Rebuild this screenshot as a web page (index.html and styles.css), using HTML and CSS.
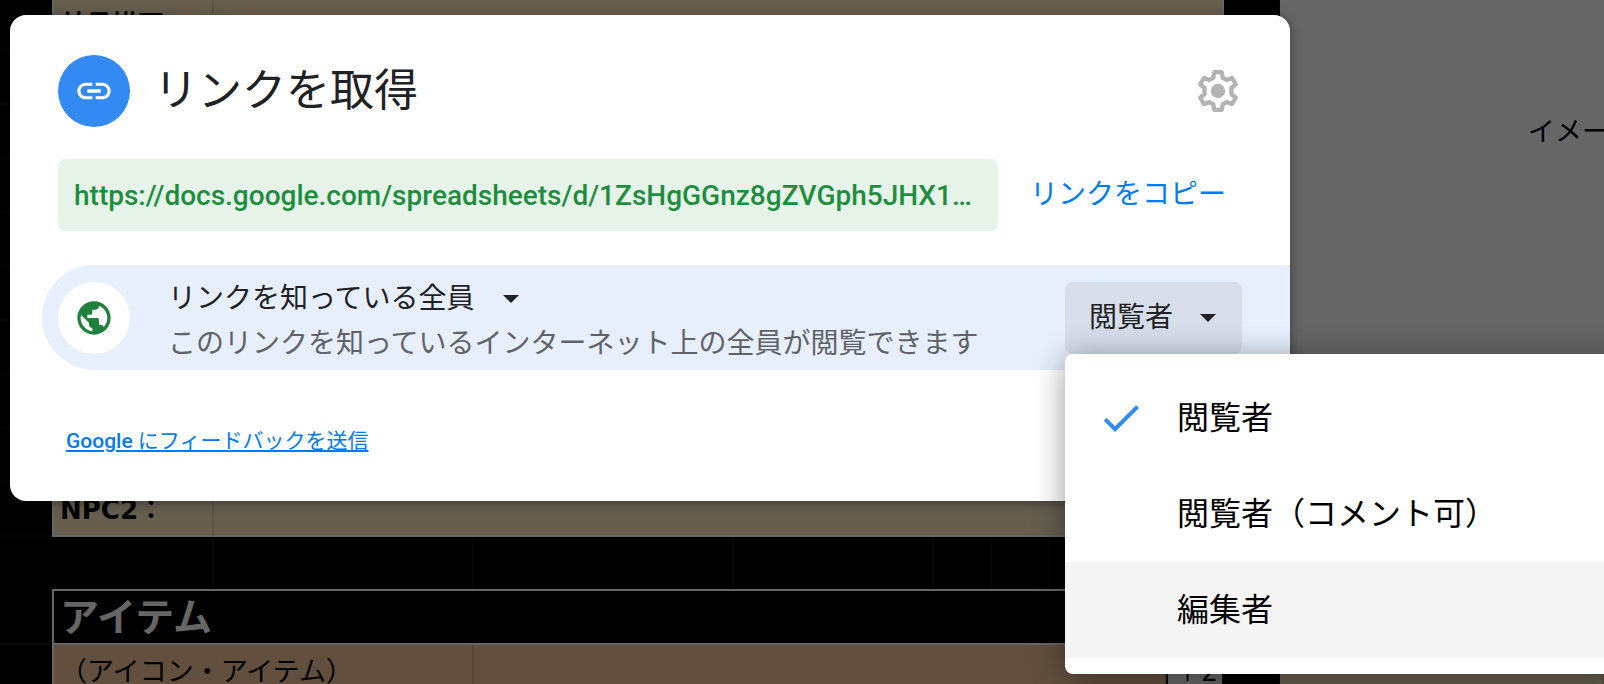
FILE: index.html
```
<!DOCTYPE html>
<html lang="ja">

<head>
     <meta charset="UTF-8">
     <meta name="viewport" content="width=device-width, initial-scale=1.0">
     <title>リンクを取得</title>
     <link rel="stylesheet" href="styles.css">
</head>

<body>
     <!-- 背面のスプレッドシート -->
     <div class="sheet">
          <table class="grid">
               <colgroup>
                    <col class="col-edge">
                    <col class="col-label">
                    <col class="col-wide">
                    <col class="col-wide">
                    <col class="col-mid">
                    <col class="col-small">
                    <col class="col-small">
                    <col class="col-last">
                    <col class="col-small">
                    <col class="col-gap">
                    <col>
               </colgroup>
               <tbody>
                    <tr class="first">
                         <td></td>
                         <th class="beige left" scope="row">外見描写</th>
                         <td class="beige right" colspan="7"></td>
                         <td></td>
                         <td class="memo" rowspan="11">イメージ</td>
                    </tr>
                    <tr><td></td><td class="beige left"></td><td class="beige right" colspan="7"></td><td></td></tr>
                    <tr><td></td><td class="beige left"></td><td class="beige right" colspan="7"></td><td></td></tr>
                    <tr><td></td><td class="beige left"></td><td class="beige right" colspan="7"></td><td></td></tr>
                    <tr><td></td><td class="beige left"></td><td class="beige right" colspan="7"></td><td></td></tr>
                    <tr><td></td><td class="beige left"></td><td class="beige right" colspan="7"></td><td></td></tr>
                    <tr><td></td><td class="beige left"></td><td class="beige right" colspan="7"></td><td></td></tr>
                    <tr><td></td><td class="beige left"></td><td class="beige right" colspan="7"></td><td></td></tr>
                    <tr><td></td><td class="beige left"></td><td class="beige right" colspan="7"></td><td></td></tr>
                    <tr>
                         <td></td>
                         <th class="beige left bottom" scope="row">NPC2：</th>
                         <td class="beige right bottom" colspan="7"></td>
                         <td></td>
                    </tr>
                    <tr class="blank">
                         <td></td>
                         <td></td>
                         <td></td>
                         <td></td>
                         <td></td>
                         <td></td>
                         <td></td>
                         <td></td>
                         <td></td>
                         <td></td>
                    </tr>
                    <tr>
                         <td></td>
                         <th class="heading left right bottom" colspan="8">アイテム</th>
                         <td></td>
                         <td class="beige"></td>
                    </tr>
                    <tr>
                         <td></td>
                         <td class="brown left" colspan="2">（アイコン・アイテム）</td>
                         <td class="brown" colspan="5"></td>
                         <td class="bonus">＋2</td>
                         <td></td>
                         <td class="beige"></td>
                    </tr>
               </tbody>
          </table>
     </div>

     <!-- 共有ダイアログ -->
     <div class="overlay">
          <div class="dialog" role="dialog" aria-labelledby="dialogTitle">
               <div class="dialog-header">
                    <span class="badge badge-blue">
                         <svg class="icon" viewBox="0 0 24 24" fill="currentColor" aria-hidden="true">
                              <path d="M3.9 12c0-1.71 1.39-3.1 3.1-3.1h4V7H7c-2.76 0-5 2.24-5 5s2.24 5 5 5h4v-1.9H7c-1.71 0-3.1-1.39-3.1-3.1zM8 13h8v-2H8v2zm9-6h-4v1.9h4c1.71 0 3.1 1.39 3.1 3.1s-1.39 3.1-3.1 3.1h-4V17h4c2.76 0 5-2.24 5-5s-2.24-5-5-5z" />
                         </svg>
                    </span>
                    <h1 id="dialogTitle">リンクを取得</h1>
                    <button class="settings" type="button" aria-label="設定">
                         <svg class="gear" viewBox="0 0 24 24" aria-hidden="true">
                              <path fill="none" stroke="currentColor" stroke-width="2" stroke-linejoin="round" d="M10.300 3.300h3.400l.5 2.600 1.800 1 2.500-.9 1.700 2.900-2 1.700v2.800l2 1.700-1.700 2.900-2.500-.9-1.800 1-.5 2.600h-3.400l-.5-2.600-1.800-1-2.500.9-1.700-2.900 2-1.700v-2.800l-2-1.700L5.500 6l2.500.9 1.800-1z" />
                              <circle cx="12" cy="12" r="3.300" fill="currentColor" />
                         </svg>
                    </button>
               </div>

               <div class="link-row">
                    <input class="link-url" type="text" readonly aria-label="共有リンク" value="https://docs.google.com/spreadsheets/d/1ZsHgGGnz8gZVGph5JHX1…">
                    <button class="copy" type="button">リンクをコピー</button>
               </div>

               <div class="access">
                    <span class="badge badge-white">
                         <svg class="icon" viewBox="0 0 24 24" fill="currentColor" aria-hidden="true">
                              <path d="M12 2C6.480 2 2 6.480 2 12s4.480 10 10 10 10-4.480 10-10S17.520 2 12 2zm-1 17.930c-3.950-.49-7-3.850-7-7.930 0-.62.080-1.210.210-1.790L9 15v1c0 1.100.900 2 2 2v1.930zm6.900-2.540c-.26-.81-1-1.390-1.900-1.390h-1v-3c0-.55-.45-1-1-1H8v-2h2c.55 0 1-.45 1-1V7h2c1.100 0 2-.9 2-2v-.41c2.930 1.190 5 4.060 5 7.410 0 2.080-.8 3.970-2.100 5.390z" />
                         </svg>
                    </span>
                    <div class="access-text">
                         <label class="scope">
                              <select class="scope-select" aria-label="アクセス範囲">
                                   <option>リンクを知っている全員</option>
                              </select>
                              <span class="caret"></span>
                         </label>
                         <p class="scope-note">このリンクを知っているインターネット上の全員が閲覧できます</p>
                    </div>
                    <div class="role">
                         <button class="role-button" type="button" aria-haspopup="menu" aria-expanded="true">
                              <span class="role-name">閲覧者</span>
                              <span class="caret"></span>
                         </button>
                         <div class="menu" role="menu">
                              <button class="menu-item" type="button" role="menuitemradio" aria-checked="true">
                                   <svg class="check" viewBox="0 0 24 24" fill="currentColor" aria-hidden="true">
                                        <path d="M9 16.170L4.830 12l-1.420 1.410L9 19 21 7l-1.410-1.410z" />
                                   </svg>
                                   <span class="role-name">閲覧者</span>
                              </button>
                              <button class="menu-item" type="button" role="menuitemradio" aria-checked="false">
                                   <span class="check"></span>
                                   <span class="role-name">閲覧者（コメント可）</span>
                              </button>
                              <button class="menu-item active" type="button" role="menuitemradio" aria-checked="false">
                                   <span class="check"></span>
                                   <span class="role-name">編集者</span>
                              </button>
                         </div>
                    </div>
               </div>

               <a class="feedback" href="#"><strong>Google</strong> にフィードバックを送信</a>
          </div>
     </div>
</body>

</html>
```
FILE: styles.css
```
* {
     box-sizing: border-box;
}

body {
     margin: 0;
     min-height: 100vh;
     position: relative;
     overflow: hidden;
     background-color: #000;
     color: #202124;
     font-family: Roboto, "Noto Sans CJK JP", sans-serif;
     font-size: 28px;
}

button,
input,
select {
     font: inherit;
     color: inherit;
     border: none;
     background: none;
     padding: 0;
     margin: 0;
}

button {
     cursor: pointer;
}

/* 背面のシート */
.sheet {
     height: 100vh;
     overflow: hidden;
     color: #000;
     font-family: "DejaVu Sans", "Noto Sans CJK JP", sans-serif;
     font-size: 27px;
}

.grid {
     width: 100%;
     table-layout: fixed;
     border-collapse: separate;
     border-spacing: 0;
}

.col-edge {
     width: 52px;
}

.col-label {
     width: 162px;
}

.col-wide {
     width: 260px;
}

.col-mid {
     width: 200px;
}

.col-small {
     width: 58px;
}

.col-last {
     width: 116px;
}

.col-gap {
     width: 56px;
}

.grid th,
.grid td {
     height: 54px;
     padding: 2px 6px 0;
     border-right: 2px solid #060606;
     border-bottom: 2px solid #060606;
     text-align: left;
     line-height: 36px;
     white-space: nowrap;
     overflow: hidden;
}

.grid th {
     font-size: 26px;
}

.grid td:first-child {
     border-right: none;
}

.grid .first th,
.grid .first td {
     height: 51px;
     padding-top: 0;
}

.grid .beige {
     background-color: #665f50;
     border-color: #5c5648;
}

.grid .brown {
     background-color: #624f3e;
     border-color: #584738;
}

.grid .left {
     border-left: 2px solid #666;
}

.grid .right {
     border-right-color: #666;
}

.grid .bottom {
     border-bottom-color: #666;
}

.grid .blank td {
     height: 52px;
     border-bottom: none;
}

.grid .heading {
     height: 56px;
     border-top: 2px solid #666;
     color: #666;
     font-size: 39px;
}

.grid .bonus {
     background-color: #666;
     border-left: 2px solid #000;
}

.grid .first .memo {
     padding: 114px 0 0 248px;
     background-color: #666;
     border: none;
     vertical-align: top;
}

/* ダイアログ */
.overlay {
     position: absolute;
     inset: 0;
     padding: 15px 10px;
}

.dialog {
     max-width: 1280px;
     padding: 40px 0 44px 48px;
     border-radius: 16px;
     background-color: #fff;
     box-shadow: 0 2px 12px rgba(0, 0, 0, 0.4);
}

.dialog-header {
     display: flex;
     align-items: center;
     padding-right: 46px;
}

.dialog-header h1 {
     flex: 1;
     margin: 0 0 0 24px;
     font-size: 44px;
     font-weight: 400;
     line-height: 64px;
}

.badge {
     display: flex;
     flex: none;
     align-items: center;
     justify-content: center;
     width: 72px;
     height: 72px;
     border-radius: 50%;
}

.badge-blue {
     background-color: #338af2;
     color: #fff;
}

.badge-white {
     background-color: #fff;
     color: #1e823c;
}

.icon {
     width: 40px;
     height: 40px;
}

.settings {
     display: flex;
     color: #b3b3b3;
}

.gear {
     width: 52px;
     height: 52px;
}

.link-row {
     display: flex;
     align-items: center;
     gap: 32px;
     margin-top: 32px;
     padding-right: 64px;
}

.link-url {
     flex: 1;
     min-width: 0;
     height: 72px;
     padding: 0 4px 0 16px;
     border-radius: 8px;
     background-color: #e6f3e9;
     color: #1e8e3e;
     font-weight: 500;
     text-overflow: ellipsis;
}

.copy {
     padding-bottom: 6px;
     color: #007bee;
}

.access {
     display: flex;
     align-items: center;
     min-height: 105px;
     margin: 34px 0 0 -16px;
     padding: 0 48px 0 16px;
     border-radius: 53px 0 0 53px;
     background-color: #e7effd;
}

.access-text {
     flex: 1;
     min-width: 0;
     margin-left: 38px;
     padding-top: 8px;
}

.scope {
     display: flex;
     align-items: center;
     gap: 26px;
}

.scope-select {
     appearance: none;
     height: 44px;
     line-height: 44px;
}

.caret {
     border: 8px solid transparent;
     border-top-color: currentColor;
     border-bottom: none;
}

.scope-note {
     margin: 0;
     color: #5f6368;
     line-height: 45px;
     white-space: nowrap;
}

.role {
     position: relative;
}

.role-button {
     display: flex;
     align-items: center;
     gap: 27px;
     height: 72px;
     padding: 0 26px 0 24px;
     border-radius: 8px;
     background-color: #d7deea;
}

.role-name {
     padding-bottom: 5px;
}

.menu {
     position: absolute;
     top: 100%;
     left: 0;
     width: 560px;
     padding: 16px 0;
     border-radius: 8px;
     background-color: #fff;
     box-shadow: 0 4px 32px rgba(0, 0, 0, 0.4);
}

.menu-item {
     display: flex;
     align-items: center;
     gap: 32px;
     width: 100%;
     height: 96px;
     padding: 0 32px;
     color: #000;
     font-size: 32px;
     text-align: left;
}

.menu-item.active {
     background-color: #f4f4f4;
}

.check {
     flex: none;
     width: 48px;
     height: 48px;
     color: #338af2;
}

.feedback {
     display: block;
     width: fit-content;
     margin: 55px 0 0 8px;
     color: #007bee;
     font-size: 21px;
     line-height: 32px;
}

.feedback strong {
     font-weight: 500;
}
```
